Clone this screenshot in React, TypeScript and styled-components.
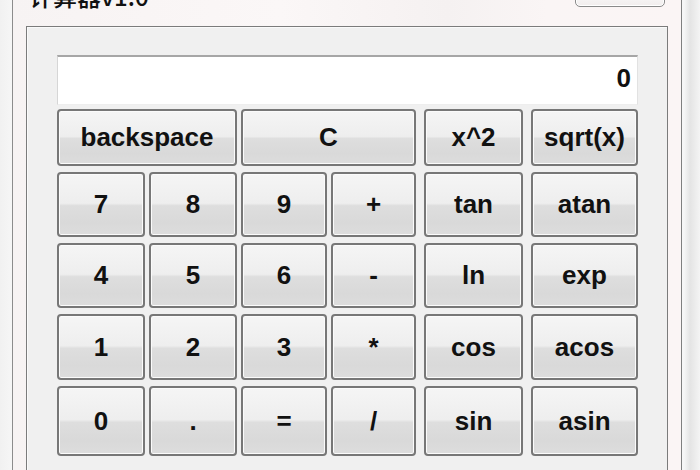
import React from "react";
import styled, { createGlobalStyle } from "styled-components";

const Global = createGlobalStyle`
  html, body { margin: 0; padding: 0; }
  body {
    background: #f2f2f2;
    font-family: "Liberation Sans", Arial, sans-serif;
    overflow: hidden;
  }
`;

const Page = styled.div`
  width: 700px;
  height: 470px;
  overflow: hidden;
  display: flex;
  background: linear-gradient(to right, #f1f1f1 0px, #f6f6f6 12px, #f6f6f6 684px, #e4e4e4 690px, #f4f4f4 700px);
`;

const Window = styled.div`
  margin-left: 12px;
  width: 670px;
  flex: none;
  border-left: 1px solid #8c8c8c;
  border-right: 1px solid #7f7f7f;
  padding: 0 13px 0 13px;
  box-sizing: border-box;
  display: flex;
  flex-direction: column;
  background: linear-gradient(
    to right,
    #f7f3f3 0%,
    #fbf7f7 40%,
    #f5f1f1 65%,
    #faf5f5 80%,
    #fbf5f5 100%
  );
`;

const TitleBar = styled.div`
  height: 26px;
  flex: none;
  display: flex;
  justify-content: space-between;
  align-items: flex-start;
  overflow: hidden;
`;

const Title = styled.div`
  margin-top: -17px;
  margin-left: 3px;
  font-family: "Noto Sans CJK SC", "Liberation Sans", sans-serif;
  font-size: 24px;
  line-height: 26px;
  font-weight: 500;
  color: #111;
`;

const CloseButton = styled.div`
  margin-top: -14px;
  margin-right: 3px;
  width: 90px;
  height: 21px;
  box-sizing: border-box;
  border: 1px solid #8a8a8a;
  border-radius: 5px;
  background: linear-gradient(#ffffff, #f1eded);
  box-shadow: inset 0 0 0 1px #ffffff;
`;

const Client = styled.div`
  flex: 1;
  border: 1px solid #7b7b7b;
  border-bottom: none;
  background: #f0f0f0;
  box-shadow: inset 1px 1px 0 #fafafa;
  padding: 28px 29px 0 30px;
  display: flex;
  flex-direction: column;
  gap: 4px;
`;

const Display = styled.div`
  height: 50px;
  box-sizing: border-box;
  background: #ffffff;
  border-top: 2px solid #a6a6a6;
  border-left: 1px solid #d6d6d6;
  border-right: 1px solid #e2e2e2;
  border-bottom: 1px solid #eeeeee;
  display: flex;
  align-items: flex-start;
  justify-content: flex-end;
  padding: 6px 6px 0 0;
  font-size: 26px;
  font-weight: bold;
  line-height: 30px;
  color: #111;
`;

const Pad = styled.div`
  display: flex;
  gap: 8px;
`;

const LeftGrid = styled.div`
  display: grid;
  grid-template-columns: 88px 88px 86px 85px;
  grid-template-rows: 57px 65px 65px 66px 70px;
  column-gap: 4px;
  row-gap: 6px;
`;

const RightGrid = styled.div`
  display: grid;
  grid-template-columns: 99px 107px;
  grid-template-rows: 57px 65px 65px 66px 70px;
  column-gap: 8px;
  row-gap: 6px;
`;

const Key = styled.button<{ $span?: number }>`
  grid-column: span ${(p) => p.$span ?? 1};
  margin: 0;
  padding: 0;
  box-sizing: border-box;
  border: 2px solid #777777;
  border-radius: 4px;
  box-shadow: inset 0 0 0 1px #fbfbfb;
  background: linear-gradient(
    #f5f5f5 0%,
    #eeeeee 48%,
    #dedede 52%,
    #d9d9d9 80%,
    #dddddd 100%
  );
  font-family: "Liberation Sans", Arial, sans-serif;
  font-size: 26px;
  font-weight: bold;
  color: #111;
  display: flex;
  align-items: center;
  justify-content: center;
  cursor: default;
`;

const leftKeys: { label: string; span?: number }[] = [
  { label: "backspace", span: 2 },
  { label: "C", span: 2 },
  { label: "7" }, { label: "8" }, { label: "9" }, { label: "+" },
  { label: "4" }, { label: "5" }, { label: "6" }, { label: "-" },
  { label: "1" }, { label: "2" }, { label: "3" }, { label: "*" },
  { label: "0" }, { label: "." }, { label: "=" }, { label: "/" },
];

const rightKeys = ["x^2", "sqrt(x)", "tan", "atan", "ln", "exp", "cos", "acos", "sin", "asin"];

export default function App() {
  return (
    <>
      <Global />
      <Page>
        <Window>
          <TitleBar>
            <Title>计算器v1.0</Title>
            <CloseButton />
          </TitleBar>
          <Client>
            <Display>0</Display>
            <Pad>
              <LeftGrid>
                {leftKeys.map((k) => (
                  <Key key={k.label} $span={k.span}>
                    {k.label}
                  </Key>
                ))}
              </LeftGrid>
              <RightGrid>
                {rightKeys.map((k) => (
                  <Key key={k}>{k}</Key>
                ))}
              </RightGrid>
            </Pad>
          </Client>
        </Window>
      </Page>
    </>
  );
}
